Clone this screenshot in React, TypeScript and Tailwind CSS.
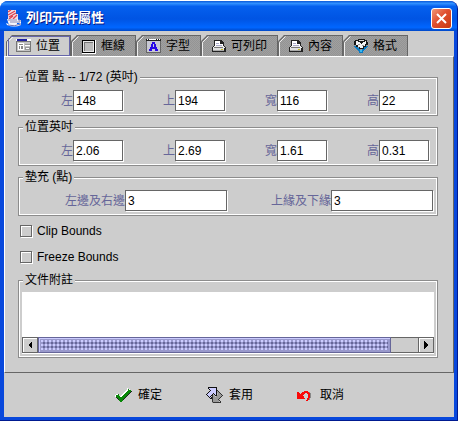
import { useState, type ReactNode } from "react";

function JavaIcon() {
  return (
    <svg width="16" height="18" viewBox="0 0 16 18" aria-hidden="true">
      <path d="M2 1h8v4h2v6H2z" fill="#f0dfe6" />
      <path d="M2 3l3-2M2 6l7-4M3 8l7-4M3 10l4-3M7 10l4-4" stroke="#e04450" strokeWidth="1.3" />
      <path d="M1 10h11v1h3v3h-4v2H3z" fill="#f4f4fb" />
      <path d="M2 11h9M4 13h7M12 11h2v2h-3" stroke="#8a8ab4" fill="none" />
      <path d="M0 14q7 4 15 0v2q-7 3-14 0z" fill="#fff" />
      <path d="M2 16q6 2 13-1" stroke="#7070a8" fill="none" />
    </svg>
  );
}

function PositionIcon() {
  return (
    <svg width="16" height="16" viewBox="0 0 16 16" shapeRendering="crispEdges" aria-hidden="true">
      <path d="M0 3h15v11H0z" fill="#777" />
      <path d="M1 4h13v9H1z" fill="#c4c4c4" />
      <path d="M0 1h15v2H0z" fill="#fff" />
      <path d="M1 1h10v2H1z" fill="#2020a0" />
      <path d="M2 5h6v7H2z" fill="#fff" />
      <path d="M3 6h4v1H3zM3 8h1v3H3zM5 8h2v3H5z" fill="#888" />
      <path d="M9 6h5v1H9zM9 9h5v3H9z" fill="#999" />
      <path d="M9 7h5v1H9zM10 10h3v1h-3z" fill="#fff" />
    </svg>
  );
}

function FrameIcon() {
  return (
    <svg width="16" height="16" viewBox="0 0 16 16" shapeRendering="crispEdges" aria-hidden="true">
      <path d="M1 2h14v14H1z" fill="#fff" />
      <path d="M1 2h13v13H1z" fill="#000" />
      <path d="M2 3h11v11H2z" fill="#e8e8e8" />
      <path d="M3 4h9v9H3z" fill="#777" />
      <path d="M4 5h8v8H4z" fill="#bdbdbd" />
    </svg>
  );
}

function FontIcon() {
  return (
    <svg width="16" height="16" viewBox="0 0 16 16" shapeRendering="crispEdges" aria-hidden="true">
      <path d="M0 1h15v14H0z" fill="#666" />
      <path d="M1 3h13v11H1z" fill="#c8c8d4" />
      <path d="M0 1h15v2H0z" fill="#222" />
      <path d="M1 1h1v1H1zM3 1h7v1H3zM11 1h1v1h-1zM13 1h1v1h-1z" fill="#fff" />
      <path d="M6 4h3v2h1v3h1v2h1v2H9v-2H6v2H3v-2h1V9h1V6h1zM7 6v3h1V6z" fill="#2808e8" fillRule="evenodd" />
    </svg>
  );
}

function PrinterIcon() {
  return (
    <svg width="16" height="16" viewBox="0 0 16 16" shapeRendering="crispEdges" aria-hidden="true">
      <path d="M3 2h7l3 3v3h1l1 2v4H1v-4l2-3z" fill="#222" />
      <path d="M4 3h5v3h3v2H4z" fill="#fff" />
      <path d="M5 5h3v1H5zM5 7h6v1H5z" fill="#a8a8c8" />
      <path d="M3 8h10l1 2H2z" fill="#eee" />
      <path d="M2 10h11v3H2z" fill="#e0e0e0" />
      <path d="M3 9h9v1H3z" fill="#777" />
      <path d="M10 11h2v1h-2z" fill="#c8c020" />
      <path d="M2 12h11v1H2z" fill="#aaa" />
    </svg>
  );
}

function FormatIcon() {
  return (
    <svg width="16" height="16" viewBox="0 0 16 16" shapeRendering="crispEdges" aria-hidden="true">
      <path d="M1 8h2l5 4 5-4h2l-5 6v1H6v-1z" fill="#087cc8" />
      <path d="M2 2h3v-1h7v1h2v2h1v3h-2v2h-2v2H6v-2H3V7H1V3h1z" fill="#181818" />
      <path d="M3 3h2v1h2v1h1v1h1V5h1V4h2V3h1v3h-1v2h-2v2H7V9H5V7H3z" fill="#f4f4f4" />
      <path d="M6 2h5v1H6z" fill="#ddd" />
      <path d="M5 6h2v1H5zM9 7h2v1H9z" fill="#999" />
      <path d="M7 12h2v2H7z" fill="#38b8f0" />
    </svg>
  );
}

function CheckIcon() {
  return (
    <svg width="18" height="16" viewBox="0 0 18 16" shapeRendering="crispEdges" aria-hidden="true">
      <path d="M2 8l4 4L15 2" stroke="#fff" strokeWidth="3" fill="none" />
      <path d="M3 10l4 4L17 4" stroke="#222" strokeWidth="2" fill="none" />
      <path d="M3 8l4 5L16 3" stroke="#088808" strokeWidth="3" fill="none" />
    </svg>
  );
}

function ApplyIcon() {
  return (
    <svg width="18" height="18" viewBox="0 0 18 18" shapeRendering="crispEdges" aria-hidden="true">
      <path d="M6 5l5-4h1v4l5 5-2 2-4-4-3 3z" fill="#b8b8b8" />
      <path d="M3 1h8v9L8 7l-3 3 2 2H5L1 9l4-4z" fill="#ccccff" />
      <path d="M15 17H7V8l3 3 3-3-2-3h1l5 4-4 4z" fill="#999" />
      <path
        d="M3 1h9v1H3zM3 2h1v1H3zM4 3h1v1H4zM5 4h1v1H5zM4 5h1v1H4zM3 6h1v1H3zM2 7h1v1H2zM1 8h1v1H1zM2 9h1v1H2zM3 10h1v1H3zM4 11h1v1H4zM5 12h3v1H5zM6 11h1v1H6zM5 10h1v1H5zM6 9h1v1H6zM7 8h1v1H7zM8 7h1v1H8zM9 8h1v1H9zM10 9h1v1h-1zM11 2h1v8h-1z"
        fill="#111"
      />
      <path
        d="M7 17h9v-1H7zM15 15h1v1h-1zM14 14h1v1h-1zM13 13h1v1h-1zM14 12h1v1h-1zM15 11h1v1h-1zM16 10h1v1h-1zM17 9h1v1h-1zM16 8h1v1h-1zM15 7h1v1h-1zM14 6h1v1h-1zM13 5h1v1h-1zM12 4h1v1h-1zM7 9h1v8H7z"
        fill="#333"
      />
    </svg>
  );
}

function UndoIcon() {
  return (
    <svg width="18" height="16" viewBox="0 0 18 16" shapeRendering="crispEdges" aria-hidden="true">
      <path d="M7 4h5v1h2v1h1v5h-1v2h-1v-3h1V7h-2V5H8z" fill="#888" />
      <path d="M1 5h2v1h1v1h1V6h1V5h2V4h4v1h1v1h1v5h-1v2h-1v1h-2v-1h1v-2h1V7h-1V6H9v1H8v1H7v1h1v2h1v1H1z" fill="#fa0808" />
    </svg>
  );
}

const tabs: { label: string; icon: ReactNode }[] = [
  { label: "位置", icon: <PositionIcon /> },
  { label: "框線", icon: <FrameIcon /> },
  { label: "字型", icon: <FontIcon /> },
  { label: "可列印", icon: <PrinterIcon /> },
  { label: "內容", icon: <PrinterIcon /> },
  { label: "格式", icon: <FormatIcon /> },
];

function Tab({ label, icon, selected, onSelect }: { label: string; icon: ReactNode; selected: boolean; onSelect: () => void }) {
  return (
    <button
      type="button"
      role="tab"
      aria-selected={selected}
      onClick={onSelect}
      className={`relative flex h-[21px] items-center gap-1 border-t border-r border-[#666] px-2.5 [clip-path:polygon(6px_0,100%_0,100%_100%,0_100%,0_6px)] ${
        selected ? "bg-[#cdcdcd]" : "bg-[#999] bg-[repeating-conic-gradient(#a0a0a0_0_25%,#949494_0_50%)] bg-[length:2px_2px]"
      }`}
    >
      <svg className="absolute -top-px left-0" width="8" height="21" viewBox="0 0 8 21" aria-hidden="true">
        <path d="M.5 21V6.5l6-6" fill="none" stroke="#666" />
        <path d="M1.5 21V7.5l6-6" fill="none" stroke="#eee" />
      </svg>
      {selected && <span className="absolute inset-0 ml-0.5 border border-[#6666aa]" />}
      {icon}
      <span>{label}</span>
    </button>
  );
}

function Group({ title, children }: { title: string; children: ReactNode }) {
  return (
    <fieldset className="min-w-0 border border-[#8c8c8c] pb-1 shadow-[inset_0_0_0_1px_#fff]">
      <legend className="ml-1 h-4 bg-[#cdcdcd] px-0.5 leading-4">{title}</legend>
      {children}
    </fieldset>
  );
}

function Field({ id, label, value, width }: { id: string; label: string; value: string; width: string }) {
  return (
    <div className="flex items-center justify-end">
      <label htmlFor={id} className="text-[#666699]">
        {label}
      </label>
      <input
        id={id}
        defaultValue={value}
        className={`h-[21px] rounded-none border border-[#666] bg-white pl-0.5 text-black shadow-[1px_1px_0_#fff] outline-none ${width}`}
      />
    </div>
  );
}

function Check({ label }: { label: string }) {
  return (
    <label className="flex h-[26px] items-center gap-1 pl-0.5">
      <input
        type="checkbox"
        className="mr-px size-3 appearance-none border border-[#666] bg-[#cdcdcd] shadow-[1px_1px_0_#fff,inset_1px_1px_0_#fff] checked:bg-[#666699]"
      />
      {label}
    </label>
  );
}

function ScrollButton({ label, points }: { label: string; points: string }) {
  return (
    <button
      type="button"
      aria-label={label}
      className="flex w-4 shrink-0 items-center justify-center border border-[#666] bg-[#cdcdcd] shadow-[inset_1px_1px_0_#fff]"
    >
      <svg width="8" height="8" viewBox="0 0 8 8" shapeRendering="crispEdges" aria-hidden="true">
        <polygon points={points} fill="#000" />
      </svg>
    </button>
  );
}

function Action({ label, icon }: { label: string; icon: ReactNode }) {
  return (
    <button type="button" className="flex items-center gap-1.5">
      {icon}
      {label}
    </button>
  );
}

export default function App() {
  const [active, setActive] = useState(0);

  return (
    <main className="bg-white pt-px pr-px font-['Liberation_Sans','Noto_Sans_CJK_TC',sans-serif] text-xs text-black">
      <div className="rounded-t-lg border-r border-b border-[#001a90] bg-[#0848dc] pr-[3px] pb-[3px] pl-1">
        <header className="-mr-[3px] -ml-1 flex h-[30px] items-center rounded-t-lg bg-[linear-gradient(#0a58d8,#3090ff_8%,#0560ee_18%,#0054e3_60%,#0066ff_88%,#0048c8)] pt-1 pr-[5px] pl-1.5">
          <JavaIcon />
          <h1 className="pl-1 text-[13px] leading-4 font-bold text-white [text-shadow:1px_1px_#0a1883]">列印元件屬性</h1>
          <button
            type="button"
            aria-label="關閉"
            className="ml-auto flex size-[21px] items-center justify-center rounded-[3px] border border-white bg-[linear-gradient(135deg,#f09878,#e05030_45%,#c83810)]"
          >
            <svg width="13" height="13" viewBox="0 0 13 13" aria-hidden="true">
              <path d="M2 2l9 9M11 2l-9 9" stroke="#fff" strokeWidth="2" />
            </svg>
          </button>
        </header>

        <div className="bg-[#cdcdcd] pt-1">
          <div role="tablist" className="flex pl-0.5">
            {tabs.map((tab, i) => (
              <Tab key={tab.label} label={tab.label} icon={tab.icon} selected={i === active} onSelect={() => setActive(i)} />
            ))}
          </div>

          <section className="border border-t-white border-r-[#666] border-b-[#666] border-l-white pt-3 pr-[15px] pb-3.5 pl-[13px]">
            <div className="flex flex-col gap-[3px]">
              <Group title="位置 點 -- 1/72 (英吋)">
                <div className="grid grid-cols-4 pt-[5px] pr-2 pl-0.5">
                  <Field id="pt-left" label="左" value="148" width="w-[50px]" />
                  <Field id="pt-top" label="上" value="194" width="w-[50px]" />
                  <Field id="pt-width" label="寬" value="116" width="w-[50px]" />
                  <Field id="pt-height" label="高" value="22" width="w-[50px]" />
                </div>
              </Group>
              <Group title="位置英吋">
                <div className="grid grid-cols-4 pt-[5px] pr-2 pl-0.5">
                  <Field id="in-left" label="左" value="2.06" width="w-[50px]" />
                  <Field id="in-top" label="上" value="2.69" width="w-[50px]" />
                  <Field id="in-width" label="寬" value="1.61" width="w-[50px]" />
                  <Field id="in-height" label="高" value="0.31" width="w-[50px]" />
                </div>
              </Group>
              <Group title="墊充 (點)">
                <div className="grid grid-cols-2 pt-[5px] pr-1 pl-0.5">
                  <Field id="pad-x" label="左邊及右邊" value="3" width="w-[102px]" />
                  <Field id="pad-y" label="上緣及下緣" value="3" width="w-[102px]" />
                </div>
              </Group>
            </div>

            <div className="py-0.5">
              <Check label="Clip Bounds" />
              <Check label="Freeze Bounds" />
            </div>

            <Group title="文件附註">
              <div className="px-[3px] pt-1">
                <textarea aria-label="文件附註" className="block h-[45px] w-full resize-none bg-white px-1 outline-none" />
                <div className="flex h-4 shadow-[0_1px_0_#fff]">
                  <ScrollButton label="向左捲動" points="6,0 6,8 2,4" />
                  <div className="flex-1 border-y border-[#666] bg-[#cdcdcd]">
                    <div className="-my-px h-4 w-[93%] border border-[#666699] bg-[#9999cc] p-0.5 shadow-[inset_1px_1px_0_#ccccff]">
                      <div className="h-full bg-[radial-gradient(circle_at_1px_1px,#ccccff_1px,transparent_1px),radial-gradient(circle_at_3px_3px,#666699_1px,transparent_1px)] bg-[length:4px_4px]" />
                    </div>
                  </div>
                  <ScrollButton label="向右捲動" points="2,0 2,8 6,4" />
                </div>
              </div>
            </Group>
          </section>

          <footer className="flex h-11 items-center justify-center gap-[43px]">
            <Action label="確定" icon={<CheckIcon />} />
            <Action label="套用" icon={<ApplyIcon />} />
            <Action label="取消" icon={<UndoIcon />} />
          </footer>
        </div>
      </div>
    </main>
  );
}
